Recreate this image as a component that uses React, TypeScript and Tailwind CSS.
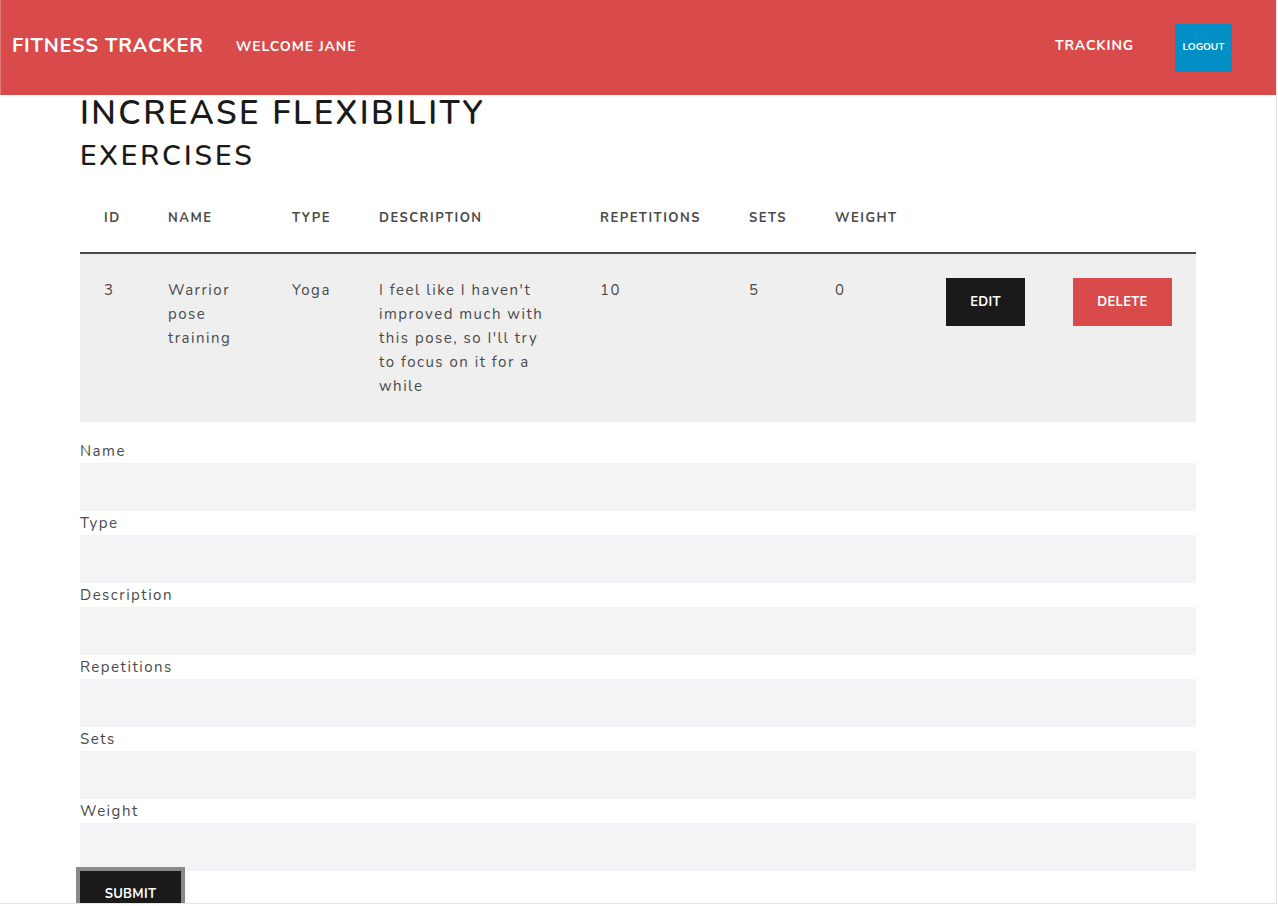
import React from 'react'

const font = { fontFamily: '"Nunito", "Open Sans", "Noto Sans", sans-serif' }

const cols = 'grid grid-cols-[64px_124px_87px_221px_149px_86px_111px_127px_147px]'

const headers = ['ID', 'NAME', 'TYPE', 'DESCRIPTION', 'REPETITIONS', 'SETS', 'WEIGHT', '', '']

const fields = ['Name', 'Type', 'Description', 'Repetitions', 'Sets', 'Weight']

export default function App() {
  return (
    <div style={font} className="w-[1277px] h-[904px] overflow-hidden bg-white border-r border-b border-[#e3e3e3]">
      <header className="flex items-center h-[95px] bg-[#d94a4a] text-white border-l border-[#e07a7a]">
        <div className="pl-[11px] mb-[4px] text-[20px] font-bold tracking-[0.8px]">FITNESS TRACKER</div>
        <div className="ml-[32px] mb-[2px] text-[14px] font-bold tracking-[0.9px]">WELCOME JANE</div>
        <div className="ml-auto mb-[4px] text-[14px] font-bold tracking-[0.9px]">TRACKING</div>
        <button className="ml-[41px] mr-[44px] w-[57px] h-[48px] bg-[#0090c6] text-[10px] font-bold text-white">
          LOGOUT
        </button>
      </header>

      <main className="px-[80px] w-[1116px] box-content">
        <h1 className="text-[33px] font-semibold tracking-[2.5px] text-[#1a1a1a] leading-[36px] mt-[1px]">
          INCREASE FLEXIBILITY
        </h1>
        <h2 className="text-[28px] font-semibold tracking-[3px] text-[#1a1a1a] leading-[36px] mt-[6px]">
          EXERCISES
        </h2>

        <div className={`${cols} mt-[6px] border-b-2 border-[#4a4a4a] text-[13px] font-bold tracking-[1.5px] text-[#4a4a4a]`}>
          {headers.map((h, i) => (
            <div key={i} className="px-[24px] pt-[26px] pb-[22px] leading-[24px]">{h}</div>
          ))}
        </div>

        <div className={`${cols} bg-[#efefef] text-[15px] tracking-[1.5px] text-[#4a4a4a] leading-[24px]`}>
          <div className="p-[24px]">3</div>
          <div className="p-[24px]">Warrior pose training</div>
          <div className="p-[24px]">Yoga</div>
          <div className="p-[24px]">I feel like I haven't improved much with this pose, so I'll try to focus on it for a while</div>
          <div className="p-[24px]">10</div>
          <div className="p-[24px]">5</div>
          <div className="p-[24px]">0</div>
          <div className="p-[24px]">
            <button className="w-[79px] h-[48px] bg-[#1a1a1a] text-white text-[13px] font-bold tracking-[0.3px]">EDIT</button>
          </div>
          <div className="p-[24px]">
            <button className="w-[99px] h-[48px] bg-[#d94a4a] text-white text-[13px] font-bold tracking-[0.3px]">DELETE</button>
          </div>
        </div>

        <form className="mt-[17px] flex flex-col">
          {fields.map((f) => (
            <label key={f} className="flex flex-col">
              <span className="text-[15px] leading-[24px] tracking-[1.5px] text-[#4a4a4a]">{f}</span>
              <input className="h-[48px] bg-[#f4f4f6] outline-none" />
            </label>
          ))}
          <div>
            <button type="button" className="w-[101px] h-[48px] bg-[#1a1a1a] outline-[4px] outline-solid outline-[#8a8a8a] text-white text-[13px] font-bold tracking-[0.3px]">
              SUBMIT
            </button>
          </div>
        </form>
      </main>
    </div>
  )
}
